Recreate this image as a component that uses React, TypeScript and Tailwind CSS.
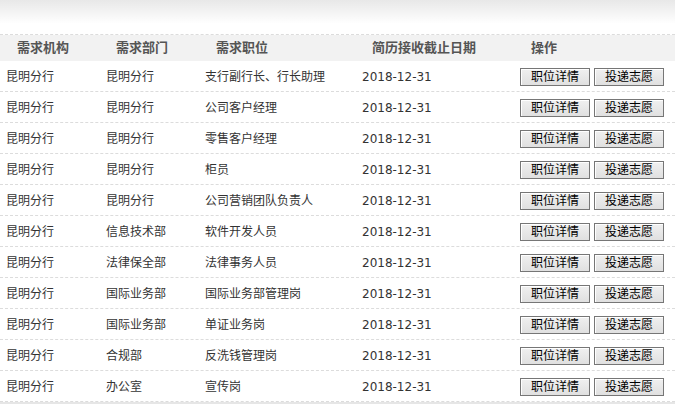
import React from 'react';

const rows = [
  ['昆明分行', '昆明分行', '支行副行长、行长助理'],
  ['昆明分行', '昆明分行', '公司客户经理'],
  ['昆明分行', '昆明分行', '零售客户经理'],
  ['昆明分行', '昆明分行', '柜员'],
  ['昆明分行', '昆明分行', '公司营销团队负责人'],
  ['昆明分行', '信息技术部', '软件开发人员'],
  ['昆明分行', '法律保全部', '法律事务人员'],
  ['昆明分行', '国际业务部', '国际业务部管理岗'],
  ['昆明分行', '国际业务部', '单证业务岗'],
  ['昆明分行', '合规部', '反洗钱管理岗'],
  ['昆明分行', '办公室', '宣传岗'],
];

const font = { fontFamily: '"DejaVu Sans", "Noto Sans CJK SC", sans-serif' };

const Btn = ({ label }: { label: string }) => (
  <button className="w-[70px] h-[18px] border border-[#767676] bg-gradient-to-b from-[#f0f0f0] to-[#e0e0e0] shadow-[inset_1px_1px_0_#fff] text-[12px] leading-[16px] text-black">
    {label}
  </button>
);

export default function App() {
  return (
    <div className="w-[675px] h-[404px] overflow-hidden bg-white text-[12px]" style={font}>
      <div className="h-[34px] bg-gradient-to-b from-[#e8e8e8] via-white via-70% to-white" />
      <div className="border-t border-dashed border-[#dcdcdc]">
        <div className="flex h-[26px] items-center bg-[#f2f2f2] text-[13px] font-bold text-[#555]">
          <div className="w-[100px] pl-[17px]">需求机构</div>
          <div className="w-[99px] pl-[16px]">需求部门</div>
          <div className="w-[157px] pl-[17px]">需求职位</div>
          <div className="w-[158px] pl-[16px]">简历接收截止日期</div>
          <div className="flex-1 pl-[17px]">操作</div>
        </div>
        {rows.map((r, i) => (
          <div key={i} className="flex h-[31px] items-center border-b border-dashed border-[#dcdcdc] text-[#333]">
            <div className="w-[100px] pl-[6px] pt-[2px]">{r[0]}</div>
            <div className="w-[99px] pl-[6px] pt-[2px]">{r[1]}</div>
            <div className="w-[157px] pl-[6px] pt-[2px]">{r[2]}</div>
            <div className="w-[158px] pl-[6px] pt-[2px]">2018-12-31</div>
            <div className="flex flex-1 gap-[4px] pl-[6px] pt-px">
              <Btn label="职位详情" />
              <Btn label="投递志愿" />
            </div>
          </div>
        ))}
        <div className="h-[3px] bg-[#e6e6e6]" />
      </div>
    </div>
  );
}
